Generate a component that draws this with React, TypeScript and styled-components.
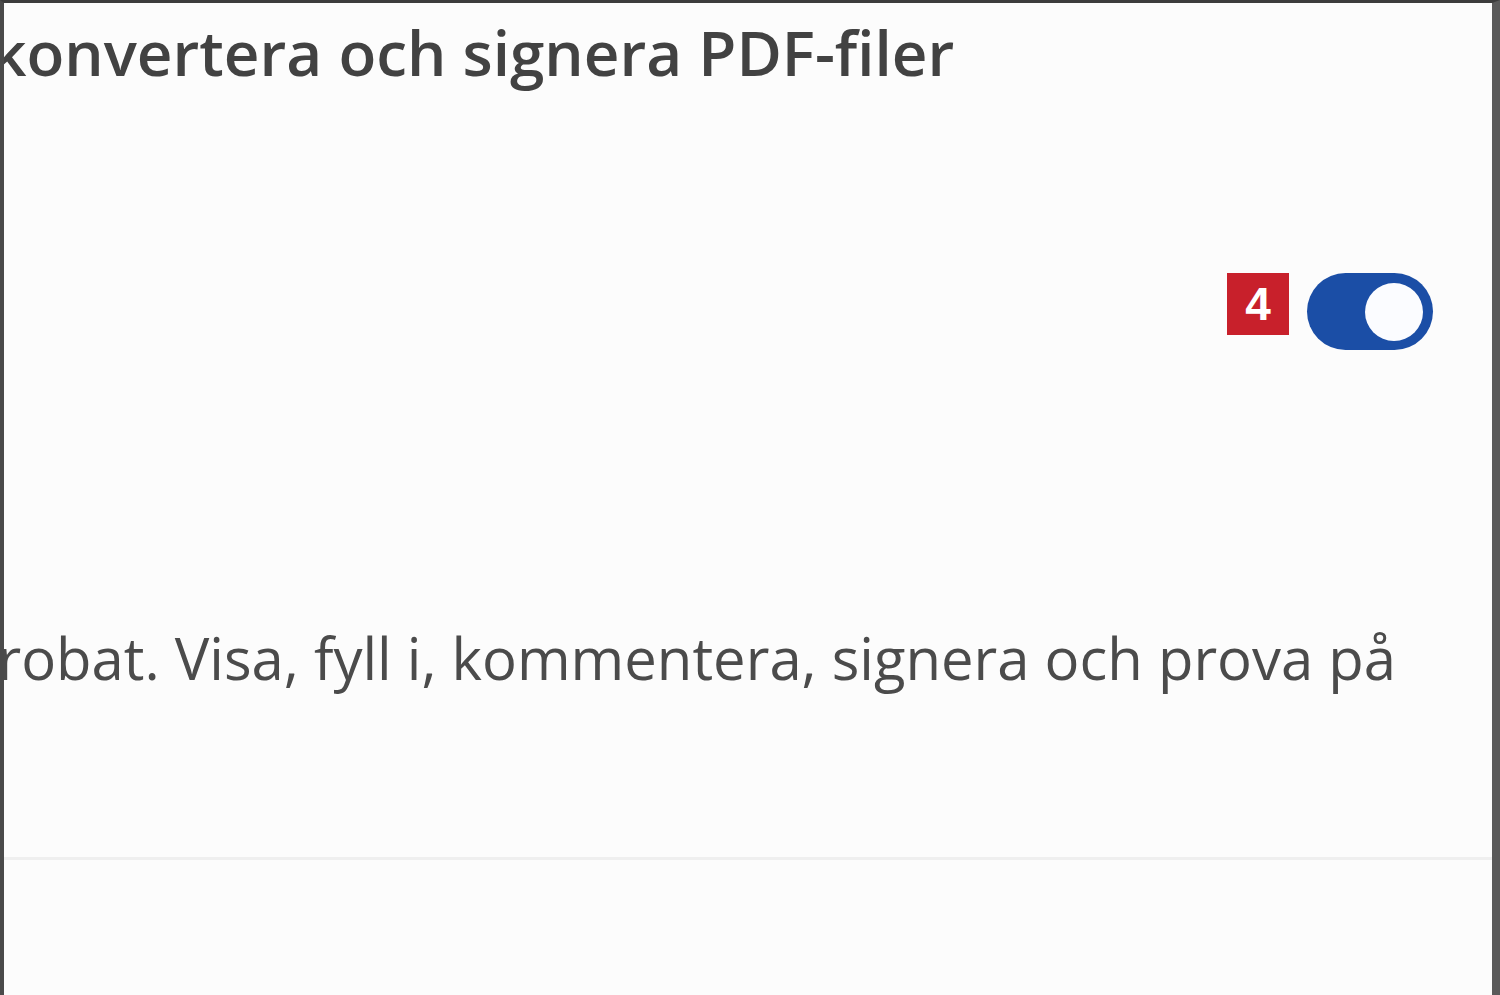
import styled, { createGlobalStyle } from 'styled-components';

const GlobalStyle = createGlobalStyle`
  html, body {
    margin: 0;
    padding: 0;
    background: #fcfcfc;
  }
  * {
    box-sizing: border-box;
  }
`;

const Frame = styled.main`
  height: 995px;
  background: #fcfcfc;
  border-top: 3px solid #3c3c3c;
  border-left: 4px solid #4a4a4a;
  border-right: 8px solid #5a5a5a;
  overflow: hidden;
  font-family: 'Open Sans', 'Noto Sans', sans-serif;
`;

const Section = styled.section`
  display: flex;
  flex-direction: column;
`;

const Title = styled.h1`
  margin: 0 0 0 -13px;
  padding-top: 7px;
  font-size: 62px;
  line-height: 84px;
  font-weight: 600;
  color: #424242;
  white-space: nowrap;
`;

const SettingRow = styled.div`
  display: flex;
  justify-content: flex-end;
  align-items: flex-start;
  gap: 18px;
  margin-top: 179px;
  padding-right: 59px;
`;

const Badge = styled.span`
  width: 62px;
  height: 62px;
  display: flex;
  align-items: center;
  justify-content: center;
  background: #c8202b;
  color: #ffffff;
  font-family: 'Liberation Sans', Arial, sans-serif;
  font-size: 46px;
  font-weight: 700;
`;

const Toggle = styled.button<{ $on: boolean }>`
  width: 126px;
  height: 77px;
  padding: 0 10px;
  border: none;
  border-radius: 39px;
  background: ${({ $on }) => ($on ? '#1b4ea6' : '#8a8a8a')};
  display: flex;
  align-items: center;
  justify-content: ${({ $on }) => ($on ? 'flex-end' : 'flex-start')};
  cursor: pointer;
`;

const Knob = styled.span`
  width: 58px;
  height: 58px;
  border-radius: 50%;
  background: #fbfcff;
`;

const Description = styled.p`
  margin: 268px 0 0 -71px;
  font-size: 58px;
  line-height: 80px;
  font-weight: 400;
  color: #4b4b4b;
  white-space: nowrap;
`;

const Divider = styled.hr`
  margin: 159px 0 0 0;
  border: none;
  border-top: 3px solid #efefef;
`;

export default function App() {
  return (
    <>
      <GlobalStyle />
      <Frame>
        <Section>
          <Title>konvertera och signera PDF-filer</Title>
          <SettingRow>
            <Badge>4</Badge>
            <Toggle type="button" $on aria-pressed="true">
              <Knob />
            </Toggle>
          </SettingRow>
          <Description>
            Acrobat. Visa, fyll i, kommentera, signera och prova på
          </Description>
        </Section>
        <Divider />
      </Frame>
    </>
  );
}
